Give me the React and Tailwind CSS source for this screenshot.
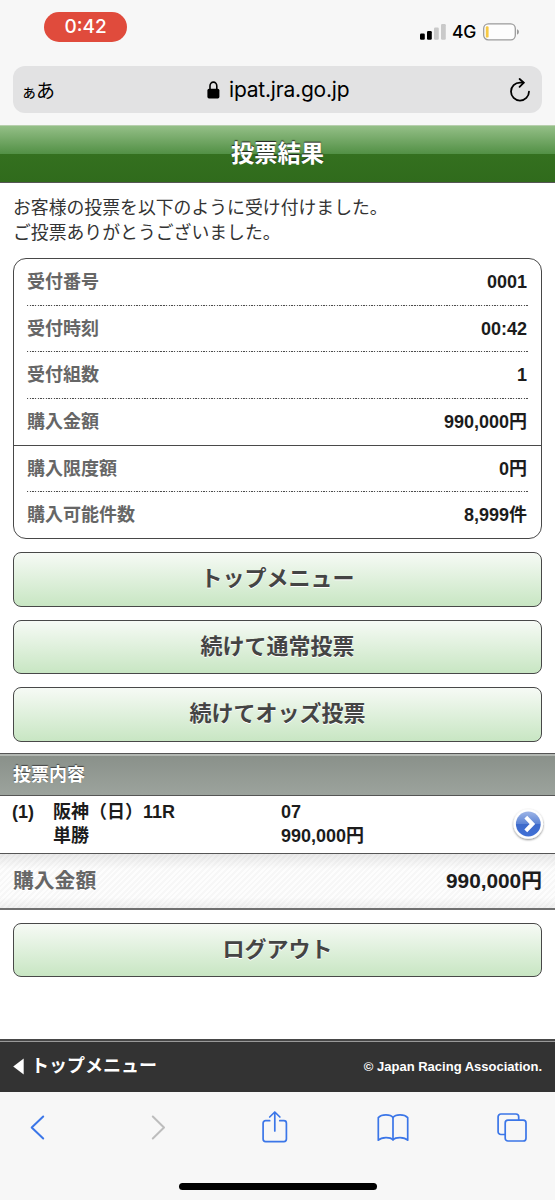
import React from 'react';
import clsx from 'clsx';

const receiptRows = [
  { label: '受付番号', value: '0001' },
  { label: '受付時刻', value: '00:42' },
  { label: '受付組数', value: '1' },
  { label: '購入金額', value: '990,000円', solid: true },
  { label: '購入限度額', value: '0円' },
  { label: '購入可能件数', value: '8,999件' },
];

function StatusBar() {
  return (
    <div className="h-[66px] pt-[12px] pl-[44px] pr-[35px] flex justify-between items-start font-['Inter','Liberation_Sans',sans-serif]">
      <div className="w-[83px] h-[30px] rounded-full bg-[#e04b3c] text-white text-[19px] leading-[30px] font-medium text-center">
        0:42
      </div>
      <div className="flex items-center mt-[9px] h-[22px]">
        <svg width="26" height="16" viewBox="0 0 26 16">
          <rect x="0" y="9.5" width="4.8" height="6.3" rx="1.2" fill="#000" />
          <rect x="7" y="7" width="4.8" height="8.8" rx="1.2" fill="#000" />
          <rect x="14" y="3.5" width="4.8" height="12.3" rx="1.2" fill="#c9c9c9" />
          <rect x="21" y="0" width="4.8" height="15.8" rx="1.2" fill="#c9c9c9" />
        </svg>
        <span className="ml-[6px] w-[26px] text-[17.5px] font-medium tracking-[-0.3px] text-black">4G</span>
        <svg className="ml-[5px]" width="37" height="18" viewBox="0 0 37 18">
          <rect x="0.7" y="0.9" width="31.6" height="16" rx="4.6" fill="#fdfdfd" stroke="#9b9b9b" strokeWidth="1.3" />
          <rect x="2.8" y="3.2" width="2.8" height="11.4" rx="1.2" fill="#f6c944" />
          <path d="M34 6.2c1.3.5 1.9 1.5 1.9 2.7s-.6 2.2-1.9 2.7z" fill="#9b9b9b" />
        </svg>
      </div>
    </div>
  );
}

function AddressBar() {
  return (
    <div className="mx-[13px] h-[47px] rounded-[12px] bg-[#e2e2e3] px-[9px] flex items-center justify-between text-black">
      <div className="w-[60px] flex items-baseline font-['Noto_Sans_CJK_JP',sans-serif] leading-none">
        <span className="-ml-px text-[16px]">ぁ</span>
        <span className="text-[19px] -ml-px">あ</span>
      </div>
      <div className="flex items-center ml-[3px]">
        <svg className="mr-[9px]" width="13" height="18" viewBox="0 0 13 18">
          <path d="M3 8.5V5a3.4 3.9 0 0 1 6.8 0v3.5" fill="none" stroke="#000" strokeWidth="1.6" />
          <rect x="0.4" y="7.8" width="12" height="9.6" rx="1.6" fill="#000" />
        </svg>
        <span className="w-[122px] whitespace-nowrap font-['Inter','Liberation_Sans',sans-serif] text-[21px] tracking-[-0.2px] leading-[24px]">
          ipat.jra.go.jp
        </span>
      </div>
      <div className="w-[60px] flex justify-end">
        <svg className="mr-[2px]" width="22" height="24" viewBox="0 0 22 24" fill="none" stroke="#000" strokeWidth="1.8" strokeLinecap="round" strokeLinejoin="round">
          <path d="M20 13.6a9 9 0 1 1-9-9h3.6" />
          <path d="M10.6 1l4.2 3.7-4.2 4.2" />
        </svg>
      </div>
    </div>
  );
}

function Divider({ solid }) {
  if (solid) {
    return <div className="h-px bg-[#4a4a4a]" />;
  }
  return (
    <div className="mx-[13px] h-px bg-[repeating-linear-gradient(90deg,#4d4d4d_0px,#4d4d4d_1.35px,#f0f0f0_1.35px,#f0f0f0_2.67px)]" />
  );
}

function Receipt() {
  return (
    <div className="mx-[13px] h-[281px] rounded-[13px] border border-[#484848] bg-white flex flex-col">
      {receiptRows.map((row, i) => (
        <React.Fragment key={row.label}>
          {i > 0 && <Divider solid={receiptRows[i - 1].solid} />}
          <div className="flex-1 px-[14px] flex items-center justify-between text-[18px] leading-[24px] font-bold">
            <span className="-ml-px text-[#666]">{row.label}</span>
            <span className="text-[#1c1c1c]">{row.value}</span>
          </div>
        </React.Fragment>
      ))}
    </div>
  );
}

function MenuButton({ children, className }) {
  return (
    <button
      className={clsx(
        'mx-[13px] block w-[529px] h-[54.5px] rounded-[8px] border border-[#484848] bg-linear-to-b from-[#f6faf5] to-[#c8e6c3] text-center text-[22px] leading-[50px] font-bold text-[#444] [text-shadow:0_1px_0_#fff]',
        className
      )}
    >
      {children}
    </button>
  );
}

function BetRow() {
  return (
    <div className="h-[58px] bg-white border-b border-[#555] px-[12px] flex items-center text-[18px] leading-[24.5px] font-bold text-[#1c1c1c]">
      <div className="w-[41px] h-[49px]">(1)</div>
      <div className="w-[228px]">
        <div>阪神（日）11R</div>
        <div>単勝</div>
      </div>
      <div className="flex-1">
        <div>07</div>
        <div>990,000円</div>
      </div>
      <svg className="-mr-[3px]" width="36" height="36" viewBox="0 0 36 36">
        <defs>
          <linearGradient id="arrowFill" x1="0" y1="0" x2="0" y2="1">
            <stop offset="0" stopColor="#9db4e6" />
            <stop offset="0.48" stopColor="#5f86d6" />
            <stop offset="0.52" stopColor="#3f6bcb" />
            <stop offset="1" stopColor="#3f6fd6" />
          </linearGradient>
          <filter id="arrowShadow" x="-20%" y="-20%" width="140%" height="140%">
            <feDropShadow dx="0" dy="1" stdDeviation="1.2" floodOpacity="0.5" />
          </filter>
        </defs>
        <circle cx="18.3" cy="18" r="14.8" fill="#fff" filter="url(#arrowShadow)" />
        <circle cx="18.3" cy="18" r="12.4" fill="url(#arrowFill)" />
        <path d="M15.8 11.2l6.6 6.8-6.6 6.8" fill="none" stroke="#fff" strokeWidth="4" />
      </svg>
    </div>
  );
}

function Total() {
  return (
    <div className="h-[56px] border-b-2 border-[#707070] px-[13px] flex items-center justify-between text-[20.8px] font-bold bg-[linear-gradient(180deg,rgba(0,0,0,0.08),rgba(0,0,0,0)_28%,rgba(0,0,0,0)_80%,rgba(0,0,0,0.05)),repeating-linear-gradient(135deg,#fdfdfd_0px,#fdfdfd_2px,#f7f7f7_2px,#f7f7f7_4px)]">
      <span className="text-[#666] [text-shadow:0_1px_0_#fff]">購入金額</span>
      <span className="mt-px text-[#1c1c1c]">990,000円</span>
    </div>
  );
}

function Toolbar() {
  return (
    <div className="h-[108px] bg-[#f7f7f7] flex flex-col items-center">
      <div className="w-full h-[91px] pt-[17px] pl-[29px] pr-[28px] flex justify-between items-start text-[#3b76e8]">
        <svg width="18" height="36" viewBox="0 0 18 36" fill="none" stroke="currentColor" strokeWidth="2" strokeLinecap="round" strokeLinejoin="round">
          <path d="M14.200 7.500L2.700 18.500 14.200 29.500" />
        </svg>
        <svg width="18" height="36" viewBox="0 0 18 36" fill="none" stroke="#bdbdbd" strokeWidth="2" strokeLinecap="round" strokeLinejoin="round" className="ml-[56px]">
          <path d="M3.8 7.5L15 18.5 3.8 29.5" />
        </svg>
        <svg width="28" height="36" viewBox="0 0 28 36" fill="none" stroke="currentColor" strokeWidth="1.7" strokeLinecap="round" strokeLinejoin="round" className="ml-[48px]">
          <path d="M8.7 11.7H4.6a2.5 2.5 0 0 0-2.5 2.5v15.9a2.5 2.5 0 0 0 2.5 2.5h18.3a2.5 2.5 0 0 0 2.5-2.5V14.2a2.5 2.5 0 0 0-2.5-2.5h-4.1" />
          <path d="M13.8 22V3.2M8.7 8l5.1-5 5.1 5" />
        </svg>
        <svg width="32" height="36" viewBox="0 0 32 36" fill="none" stroke="currentColor" strokeWidth="1.7" strokeLinecap="round" strokeLinejoin="round" className="ml-[42px]">
          <path d="M16 8.5C13.4 5 4.6 5 1.3 8.600V31.200C4.6 27.8 13.4 27.8 16 30.8" />
          <path d="M16 8.500C18.6 5 27.4 5 30.7 8.600V31.200C27.4 27.8 18.6 27.8 16 30.8V8.500" />
        </svg>
        <svg width="30" height="36" viewBox="0 0 30 36" fill="none" stroke="currentColor" strokeWidth="1.7" strokeLinejoin="round" className="ml-[42px]">
          <rect x="8.2" y="11.2" width="20.8" height="20.8" rx="2.8" />
          <path d="M8.2 25.5H3.9a2.8 2.8 0 0 1-2.8-2.8V7.8A2.8 2.8 0 0 1 3.9 5h15a2.8 2.8 0 0 1 2.8 2.8v3.4" />
        </svg>
      </div>
      <div className="w-[198px] h-[7px] rounded-full bg-black" />
    </div>
  );
}

function App() {
  return (
    <div className="w-[555px] h-[1200px] overflow-hidden bg-[#f7f7f7] font-['Liberation_Sans','Noto_Sans_CJK_JP',sans-serif]">
      <StatusBar />
      <AddressBar />

      <main className="mt-[12px] h-[967px] bg-white flex flex-col">
        <h1 className="h-[58px] shrink-0 border-t border-t-[#b7cfad] border-b border-b-[#555] bg-[linear-gradient(180deg,#94bf87_0%,#529045_50%,#34701f_50%,#306b1c_100%)] text-center text-[23.3px] leading-[57px] font-bold text-white [text-shadow:0_-1px_1px_#222]">
          投票結果
        </h1>

        <p className="mt-[13px] px-[13px] text-[17.85px] leading-[24.5px] text-[#333]">
          お客様の投票を以下のように受け付けました。
          <br />
          ご投票ありがとうございました。
        </p>

        <div className="mt-[13px]">
          <Receipt />
        </div>

        <div className="mt-[13px] flex flex-col gap-[13px]">
          <MenuButton>トップメニュー</MenuButton>
          <MenuButton>続けて通常投票</MenuButton>
          <MenuButton>続けてオッズ投票</MenuButton>
        </div>

        <h2 className="mt-[11.5px] h-[42.5px] shrink-0 border-t border-b border-[#555] bg-linear-to-b from-[#899089] to-[#9ca39d] shadow-[inset_0_2px_0_#b2b7b2] px-[13px] text-[18px] leading-[42px] font-bold text-white [text-shadow:0_-1px_1px_#444]">
          投票内容
        </h2>
        <BetRow />
        <Total />

        <MenuButton className="mt-[13px] shrink-0">ログアウト</MenuButton>

        <footer className="mt-auto h-[53px] border-t-2 border-[#484848] bg-[#333] shadow-[inset_0_1px_0_#999] px-[13px] flex items-center justify-between font-bold text-white">
          <div className="flex items-center">
            <svg width="11" height="17" viewBox="0 0 11 17">
              <path d="M10.7 0.5v16L0.2 8.5z" fill="#fff" />
            </svg>
            <span className="ml-[7px] text-[18px]">トップメニュー</span>
          </div>
          <span className="text-[13px]">© Japan Racing Association.</span>
        </footer>
      </main>

      <Toolbar />
    </div>
  );
}

export default App;
